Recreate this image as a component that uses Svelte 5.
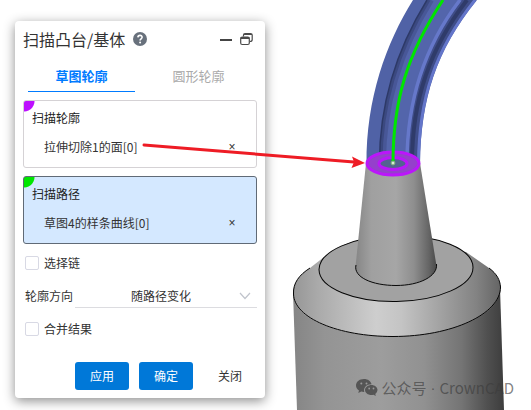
<script>
  let tab = $state('sketch');
  let chain = $state(false);
  let merge = $state(false);
  let direction = $state('path');

  const tabs = [
    { id: 'sketch', label: '草图轮廓' },
    { id: 'circle', label: '圆形轮廓' }
  ];
  const picks = [
    { title: '扫描轮廓', item: '拉伸切除1的面[0]', tone: 'profile' },
    { title: '扫描路径', item: '草图4的样条曲线[0]', tone: 'path' }
  ];
</script>

<main class="viewport">
  <svg class="scene" viewBox="0 0 531 410" width="531" height="410" aria-hidden="true">
    <defs>
      <linearGradient id="body" x1="293" x2="504" y1="0" y2="0" gradientUnits="userSpaceOnUse">
        <stop offset="0" stop-color="#858585" />
        <stop offset=".15" stop-color="#949494" />
        <stop offset=".42" stop-color="#9d9d9d" />
        <stop offset=".62" stop-color="#919191" />
        <stop offset=".8" stop-color="#747474" />
        <stop offset=".92" stop-color="#505050" />
        <stop offset="1" stop-color="#3d3d3d" />
      </linearGradient>
      <linearGradient id="bevel" x1="293" x2="501" y1="0" y2="0" gradientUnits="userSpaceOnUse">
        <stop offset="0" stop-color="#969696" />
        <stop offset=".12" stop-color="#aaaaaa" />
        <stop offset=".4" stop-color="#cecece" />
        <stop offset=".52" stop-color="#c4c4c4" />
        <stop offset=".72" stop-color="#a0a0a0" />
        <stop offset=".88" stop-color="#838383" />
        <stop offset="1" stop-color="#646464" />
      </linearGradient>
      <linearGradient id="neck" x1="355" x2="437" y1="0" y2="0" gradientUnits="userSpaceOnUse">
        <stop offset="0" stop-color="#858585" />
        <stop offset=".2" stop-color="#a0a0a0" />
        <stop offset=".5" stop-color="#a6a6a6" />
        <stop offset=".72" stop-color="#8e8e8e" />
        <stop offset=".9" stop-color="#656565" />
        <stop offset="1" stop-color="#484848" />
      </linearGradient>
    </defs>

    <path fill="url(#body)" d="M293 292 297 410H504L500 288Z" />
    <path fill="url(#bevel)" d="M293 294C293 283 299 275 310 268L324 257 396 240 466 252 489 268C497 274 500.500 281 500.500 288C500.500 315 452 336.500 393 336.500C338 336.500 293 319 293 294Z" />
    <path fill="none" stroke="#050505" d="M310 268C299 275 293 283 293.500 294C294 318 338 336.500 393 336.500C452 336.500 500.500 314 500.500 287C500 280 497 274 489 268" />
    <ellipse cx="396" cy="268.500" rx="77" ry="33" fill="#a2a2a2" stroke="#050505" transform="rotate(-1 396 268)" />
    <path fill="url(#neck)" d="M366 163 355.500 267C356 278 374 285.500 396 285.500S436 277 436.500 266L420 163Z" />
    <path fill="none" stroke="#080808" d="M356 265C353 277 372 285.500 396 285.500S438 276 436.500 264" />

    <path fill="#5062a6" d="M413 0C386 43 366 99 366.500 164H420C421 99 436 50 477 0Z" />
    <path fill="#5365ab" d="M427 0C398 47 379 97 379 164H407C407 95 425 44 462 0Z" />
    <path fill="none" stroke="#333f72" stroke-width="6" stroke-opacity=".35" d="M431 0C402 47 383 100 383 163" />
    <path fill="none" stroke="#333f72" stroke-width="3" stroke-opacity=".6" d="M429 0C400 47 381 100 381 163" />
    <path fill="none" stroke="#2d3967" stroke-width="1.500" d="M427 0C398 47 379.500 100 379.500 163" />
    <path fill="#3f4d88" d="M462 0C425 44 408 100 408 163H419C420 100 435 50 475 0Z" />
    <path fill="none" stroke="#2c3763" stroke-width="4" stroke-opacity=".8" d="M467 0C430 48 412 100 412 163" />
    <path fill="none" stroke="#6678ca" stroke-width="3.500" d="M460 0C424 47 407 100 407 163" />
    <path fill="none" stroke="#6476ca" stroke-width="3" d="M475 0C435 50 419 98 418.500 163" />

    <ellipse cx="393" cy="163.500" rx="26" ry="11.500" fill="#9540cb" stroke="#bb16fa" stroke-width="3" />
    <ellipse cx="393" cy="163.500" rx="14" ry="6" fill="#536390" stroke="#bb16fa" stroke-width="3" />
    <path fill="none" stroke="#00e600" stroke-width="3" d="M443 0C407 54 393 101 393 163" />
    <circle cx="393" cy="163" r="2" fill="#d6ead3" stroke="#72a575" />
  </svg>

  <form class="panel" onsubmit={(e) => e.preventDefault()}>
    <header>
      <h1>扫描凸台/基体</h1>
      <button class="icon" type="button" aria-label="帮助">
        <svg width="14" height="14" viewBox="0 0 14 14">
          <circle cx="7" cy="7" r="7" fill="#68717c" />
          <path d="M4.900 5.400C5 2.700 9.200 2.800 9.100 5.300C9 6.900 7.100 6.700 7.100 8.500" fill="none" stroke="#fff" stroke-width="1.600" />
          <circle cx="7.100" cy="10.500" r="1" fill="#fff" />
        </svg>
      </button>
      <span class="grow"></span>
      <button class="icon" type="button" aria-label="最小化">
        <svg width="12" height="14" viewBox="0 0 12 14"><path d="M0 8H12" stroke="#444" stroke-width="2" /></svg>
      </button>
      <button class="icon" type="button" aria-label="还原">
        <svg width="13" height="14" viewBox="0 0 13 14" fill="none" stroke="#4a4a4a">
          <rect x=".700" y="5" width="8.600" height="7.500" rx="1.500" stroke-width="1.200" />
          <path d="M.700 6H9.300" stroke-width="2" />
          <path d="M3.500 4.500V3Q3.500 1.500 5 1.500H10.500Q12.200 1.500 12.200 3V7.500Q12.200 9.500 10 9.500M4 2.500H12" stroke-width="1.200" />
        </svg>
      </button>
    </header>

    <div class="tabs" role="tablist">
      {#each tabs as t}
        <button type="button" role="tab" aria-selected={tab === t.id} class:active={tab === t.id} onclick={() => (tab = t.id)}>{t.label}</button>
      {/each}
    </div>

    <div class="picks">
      {#each picks as p}
        <section class="pick {p.tone}">
          <h2>{p.title}</h2>
          <div class="item">
            <span>{p.item}</span>
            <button type="button" aria-label="移除">×</button>
          </div>
        </section>
      {/each}
    </div>

    <div class="options">
      <label class="row"><input type="checkbox" bind:checked={chain} />选择链</label>
      <div class="row direction">
        <label for="direction">轮廓方向</label>
        <div class="select">
          <select id="direction" bind:value={direction}>
            <option value="path">随路径变化</option>
          </select>
          <svg width="12" height="8" viewBox="0 0 12 8"><path d="M1 1 6 6.500 11 1" fill="none" stroke="#c0c4cc" stroke-width="1.200" /></svg>
        </div>
      </div>
      <label class="row"><input type="checkbox" bind:checked={merge} />合并结果</label>
    </div>

    <footer>
      <button class="primary" type="button">应用</button>
      <button class="primary" type="submit">确定</button>
      <button class="plain" type="button">关闭</button>
    </footer>
  </form>

  <svg class="scene" viewBox="0 0 531 410" width="531" height="410" aria-hidden="true">
    <path d="M144 145 354 162" stroke="#ee1c25" stroke-width="3" stroke-linecap="round" />
    <path d="M352 156.500 365 163 351.500 168 354 162Z" fill="#ee1c25" />
  </svg>

  <div class="mark">
    <svg width="22" height="18" viewBox="0 0 22 18">
      <path fill="#555" d="M8 0C3.300 0 0 2.900 0 6.500C0 8.600 1.100 10.300 3 11.500L2.300 14 5.300 12.500C6.300 12.800 7.200 13 8.300 12.900C7.100 8.800 10.400 5.300 15.600 5.300C14.900 2.200 11.900 0 8 0Z" />
      <path fill="#555" d="M21.500 11C21.500 8.200 18.700 6 15.400 6S9 8.200 9 11S11.900 16 15.400 16Q16.500 16 17.500 15.700L19.800 17 19.300 14.900Q21.500 13.300 21.500 11Z" />
      <g fill="#999">
        <circle cx="5.300" cy="4.600" r="1" /><circle cx="10.500" cy="4.600" r="1" />
        <circle cx="13.200" cy="9.500" r=".900" /><circle cx="17.500" cy="9.500" r=".900" />
      </g>
    </svg>
    <span>公众号</span>
    <span class="dot">·</span>
    <span>CrownCAD</span>
  </div>
</main>

<style>
  :global(body) {
    margin: 0;
    background: #fff;
  }
  .viewport {
    position: relative;
    box-sizing: border-box;
    min-height: 100vh;
    padding: 21px 15px 12px;
    overflow: hidden;
    font: 12px/18px 'Noto Sans CJK SC', sans-serif;
    color: #333;
  }
  .scene {
    position: absolute;
    top: 0;
    left: 0;
    pointer-events: none;
  }
  .panel {
    position: relative;
    box-sizing: border-box;
    width: 250px;
    padding: 0 8px 8px;
    border-radius: 4px;
    background: #fff;
    box-shadow: 0 3px 12px rgba(0, 0, 0, 0.45);
  }
  button,
  select {
    margin: 0;
    padding: 0;
    border: 0;
    background: none;
    font: inherit;
    color: inherit;
    cursor: pointer;
  }
  header {
    display: flex;
    align-items: center;
    gap: 8px;
    height: 36px;
    padding-right: 4px;
  }
  h1 {
    margin: 0;
    font-size: 16px;
    font-weight: 400;
    line-height: 24px;
    white-space: nowrap;
  }
  .icon {
    display: flex;
  }
  .grow {
    flex: 1;
  }
  .tabs {
    display: flex;
    height: 35px;
  }
  .tabs button {
    flex: 1;
    margin: 0 5px;
    padding-top: 4px;
    border-bottom: 1px solid transparent;
    font-size: 13px;
    color: #aaa;
  }
  .tabs button.active {
    border-bottom-color: #007bff;
    font-weight: 700;
    color: #007bff;
  }
  .picks {
    display: grid;
    gap: 8px;
    margin-top: 8px;
  }
  .pick {
    box-sizing: border-box;
    height: 68px;
    padding: 8px;
    border: 1px solid #d5d2d5;
    border-radius: 3px;
    background: radial-gradient(circle at 0 0, #bd10ff 10px, transparent 11px) #fff;
  }
  .path {
    border-color: #606a76;
    background: radial-gradient(circle at 0 0, #00e600 10px, transparent 11px) #d4e8ff;
  }
  h2 {
    margin: 0;
    font-size: 12px;
    font-weight: 400;
    color: #222;
  }
  .item {
    display: flex;
    justify-content: space-between;
    margin-top: 11px;
    padding: 0 12px;
  }
  .item button {
    width: 8px;
    font-family: 'Liberation Sans', sans-serif;
  }
  .options {
    display: grid;
    gap: 9px;
    margin-top: 7px;
  }
  .row {
    display: flex;
    align-items: center;
    height: 24px;
    padding-left: 2px;
  }
  input {
    appearance: none;
    box-sizing: border-box;
    width: 14px;
    height: 14px;
    margin: 0 5px 0 0;
    border: 1px solid #d8d9e4;
    border-radius: 2px;
    background: #fff;
  }
  input:checked {
    background: #0078d8;
  }
  .direction {
    gap: 2px;
  }
  .select {
    display: flex;
    align-items: center;
    flex: 1;
    height: 23px;
    padding-right: 6px;
    border-bottom: 1px solid #dcdce0;
  }
  select {
    flex: 1;
    padding-left: 8px;
    appearance: none;
    text-align: center;
    text-align-last: center;
  }
  footer {
    display: flex;
    justify-content: flex-end;
    gap: 10px;
    margin-top: 21px;
  }
  footer button {
    width: 54px;
    height: 28px;
    border-radius: 3px;
  }
  .primary {
    background: #0078d8;
    color: #fff;
  }
  .mark {
    position: absolute;
    right: 17px;
    bottom: 10px;
    display: flex;
    align-items: center;
    gap: 4px;
    font-size: 15px;
    line-height: 24px;
    color: rgba(60, 60, 60, 0.65);
    white-space: nowrap;
  }
  .dot {
    font-family: 'Liberation Sans', sans-serif;
  }
</style>
